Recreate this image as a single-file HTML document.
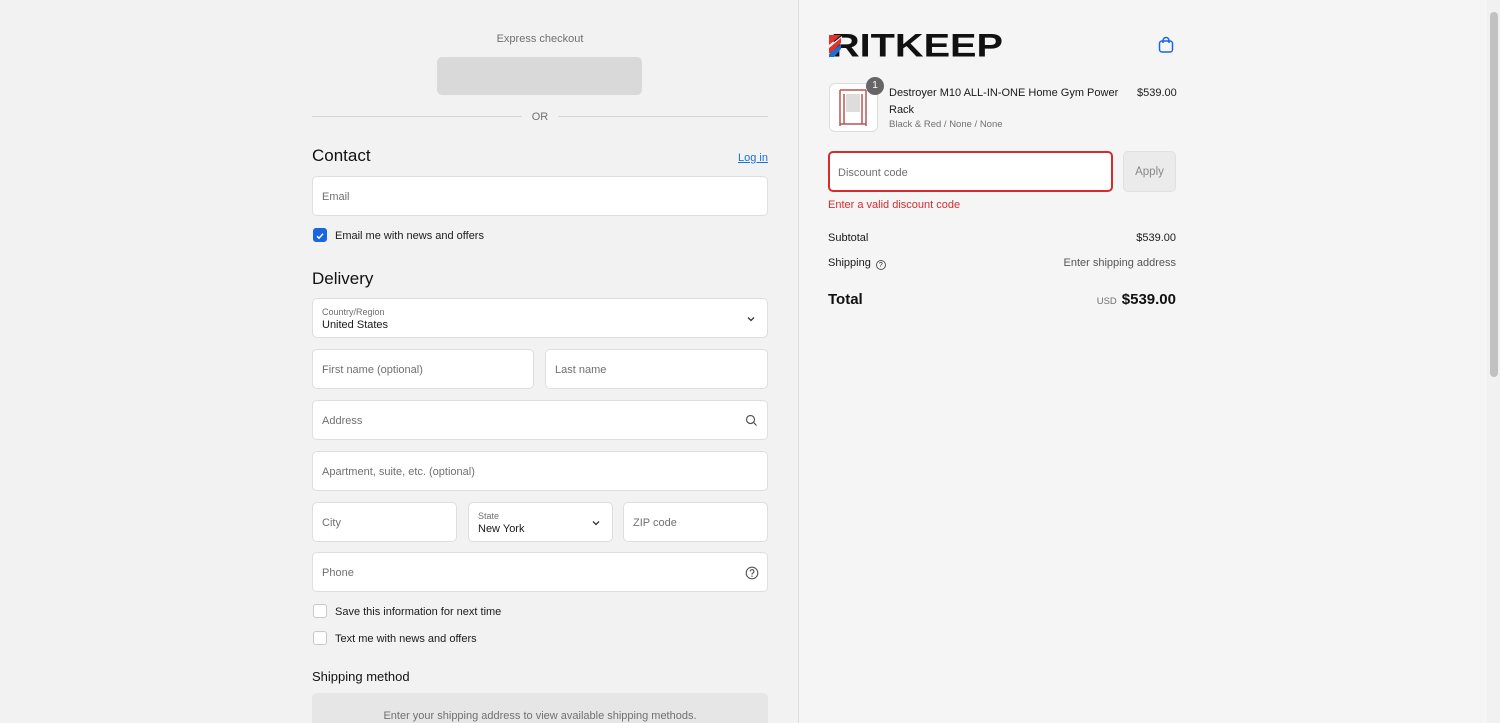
<!DOCTYPE html>
<html><head><meta charset="utf-8"><style>
*{box-sizing:border-box;margin:0;padding:0}
body{width:1500px;height:723px;overflow:hidden;font-family:"Liberation Sans",sans-serif;background:#f2f2f2;position:relative;color:#1a1a1a}
.left{position:absolute;left:0;top:0;width:798px;height:723px;background:#f2f2f2;overflow:hidden}
.right{position:absolute;left:798px;top:0;width:689px;height:723px;background:#f5f5f5;border-left:1px solid #dedede}
.sb{position:absolute;left:1487px;top:0;width:13px;height:723px;background:#f1f1f1}
.sb div{position:absolute;left:3px;top:12px;width:8px;height:365px;background:#c1c1c1;border-radius:4px}
.abs{position:absolute}
.inp{position:absolute;background:#fff;border:1px solid #dedede;border-radius:5px;font-size:11px;color:#707070;padding-left:9px;padding-top:2px;display:flex;align-items:center}
.lbl{font-size:11px;color:#1a1a1a}
.cb{position:absolute;width:14px;height:14px;border:1px solid #c8c8c8;border-radius:3px;background:#fff}
h2{position:absolute;font-size:17px;font-weight:normal;color:#111}
</style></head><body>
<div class="left">
<div class="abs" style="left:312px;top:33px;width:456px;text-align:center;font-size:11px;color:#707070">Express checkout</div>
<div class="abs" style="left:437px;top:57px;width:205px;height:38px;background:#d9d9d9;border-radius:5px"></div>
<div class="abs" style="left:312px;top:116px;width:210px;height:1px;background:#d6d6d6"></div>
<div class="abs" style="left:558px;top:116px;width:210px;height:1px;background:#d6d6d6"></div>
<div class="abs" style="left:522px;top:111px;width:36px;text-align:center;font-size:11px;color:#707070">OR</div>
<h2 style="left:312px;top:146px">Contact</h2>
<div class="abs" style="left:738px;top:152px;font-size:11px;color:#1773d8;text-decoration:underline">Log in</div>
<div class="inp" style="left:312px;top:176px;width:456px;height:40px">Email</div>
<div class="cb" style="left:313px;top:228px;background:#1a66e0;border-color:#1a66e0"><svg width="12" height="12" viewBox="0 0 12 12"><path d="M3 6.2l2 2 4-4.4" stroke="#fff" stroke-width="1.5" fill="none"/></svg></div>
<div class="abs lbl" style="left:335px;top:230px">Email me with news and offers</div>
<h2 style="left:312px;top:269px">Delivery</h2>
<div class="inp" style="left:312px;top:298px;width:456px;height:40px;display:block;padding-top:8px"><div style="font-size:9px;color:#707070">Country/Region</div><div style="font-size:11px;color:#1a1a1a;margin-top:2px">United States</div>
<svg class="abs" style="left:433px;top:15px" width="10" height="10" viewBox="0 0 10 10"><path d="M2 3.5l3 3 3-3" stroke="#333" stroke-width="1.3" fill="none"/></svg></div>
<div class="inp" style="left:312px;top:349px;width:222px;height:40px">First name (optional)</div>
<div class="inp" style="left:545px;top:349px;width:223px;height:40px">Last name</div>
<div class="inp" style="left:312px;top:400px;width:456px;height:40px">Address
<svg class="abs" style="left:432px;top:13px" width="13" height="13" viewBox="0 0 13 13"><circle cx="5.5" cy="5.5" r="4" stroke="#555" stroke-width="1.2" fill="none"/><path d="M8.5 8.5l3 3" stroke="#555" stroke-width="1.2"/></svg></div>
<div class="inp" style="left:312px;top:451px;width:456px;height:40px">Apartment, suite, etc. (optional)</div>
<div class="inp" style="left:312px;top:502px;width:145px;height:40px">City</div>
<div class="inp" style="left:468px;top:502px;width:145px;height:40px;display:block;padding-top:8px"><div style="font-size:9px;color:#707070">State</div><div style="font-size:11px;color:#1a1a1a;margin-top:2px">New York</div>
<svg class="abs" style="left:122px;top:15px" width="10" height="10" viewBox="0 0 10 10"><path d="M2 3.5l3 3 3-3" stroke="#333" stroke-width="1.3" fill="none"/></svg></div>
<div class="inp" style="left:623px;top:502px;width:145px;height:40px">ZIP code</div>
<div class="inp" style="left:312px;top:552px;width:456px;height:40px">Phone
<svg class="abs" style="left:432px;top:13px" width="14" height="14" viewBox="0 0 14 14"><circle cx="7" cy="7" r="5.8" stroke="#555" stroke-width="1.1" fill="none"/><path d="M5.3 5.5a1.8 1.8 0 1 1 2.4 1.6c-.5.2-.7.5-.7 1v.5" stroke="#555" stroke-width="1.1" fill="none"/><circle cx="7" cy="10.2" r=".7" fill="#555"/></svg></div>
<div class="cb" style="left:313px;top:604px"></div>
<div class="abs lbl" style="left:335px;top:606px">Save this information for next time</div>
<div class="cb" style="left:313px;top:631px"></div>
<div class="abs lbl" style="left:335px;top:633px">Text me with news and offers</div>
<div class="abs" style="left:312px;top:669px;font-size:13px;color:#111">Shipping method</div>
<div class="abs" style="left:312px;top:693px;width:456px;height:40px;background:#e6e6e6;border-radius:5px;text-align:center;padding-top:17px;font-size:11px;color:#707070">Enter your shipping address to view available shipping methods.</div>
</div>
<div class="right">
<svg class="abs" style="left:30px;top:32px" width="176" height="26" viewBox="0 0 176 26">
<text x="2" y="24.5" font-family="Liberation Sans" font-weight="bold" font-size="32" fill="#111" textLength="172" lengthAdjust="spacingAndGlyphs">RITKEEP</text>
<path d="M0 3h12l-12 10z" fill="#e0322b"/><path d="M0 14l13-10v5l-10 10H0z" fill="#f5f5f5"/><path d="M0 16l12-10v5L2 21H0z" fill="#e0322b"/><path d="M0 22l12-10v5L5 25H0z" fill="#1e6fd0"/>
</svg>
<svg class="abs" style="left:358px;top:36px" width="18" height="18" viewBox="0 0 18 18"><rect x="2.5" y="5" width="13" height="11" rx="2.5" stroke="#1a66e0" stroke-width="1.5" fill="none"/><path d="M6 7V4.5a3 3 0 0 1 6 0V7" stroke="#1a66e0" stroke-width="1.5" fill="none"/></svg>
<div class="abs" style="left:30px;top:83px;width:49px;height:49px;background:#fff;border:1px solid #ddd;border-radius:6px">
<svg width="47" height="47" viewBox="0 0 47 47"><path d="M10 6v36M36 6v36M10 6h26M10 40h26M14 10v30M32 10v30" stroke="#b55" stroke-width="1.5" fill="none"/><rect x="16" y="10" width="14" height="18" fill="#ddd"/></svg></div>
<div class="abs" style="left:67px;top:77px;width:18px;height:18px;border-radius:9px;background:#666;color:#fff;font-size:10px;text-align:center;line-height:18px">1</div>
<div class="abs" style="left:90px;top:85px;width:235px;font-size:11px;line-height:17px;color:#1a1a1a">Destroyer M10 ALL-IN-ONE Home Gym Power Rack</div>
<div class="abs" style="left:90px;top:119px;font-size:9.5px;color:#707070">Black &amp; Red / None / None</div>
<div class="abs" style="left:338px;top:87px;font-size:11px">$539.00</div>
<div class="abs" style="left:29px;top:151px;width:285px;height:41px;background:#fff;border:2px solid #d72c2c;border-radius:5px;font-size:11px;color:#707070;padding:14px 0 0 8px">Discount code</div>
<div class="abs" style="left:324px;top:151px;width:53px;height:41px;background:#ebebeb;border:1px solid #e0e0e0;border-radius:5px;font-size:11.5px;color:#888;text-align:center;line-height:41px">Apply</div>
<div class="abs" style="left:29px;top:199px;font-size:11px;color:#d72c2c">Enter a valid discount code</div>
<div class="abs" style="left:29px;top:232px;font-size:11px">Subtotal</div>
<div class="abs" style="left:300px;top:232px;width:77px;text-align:right;font-size:11px">$539.00</div>
<div class="abs" style="left:29px;top:257px;font-size:11px">Shipping <span style="display:inline-block;width:10px;height:10px;border:1px solid #555;border-radius:50%;font-size:7px;text-align:center;line-height:9px;vertical-align:-1px;margin-left:2px">?</span></div>
<div class="abs" style="left:220px;top:257px;width:157px;text-align:right;font-size:11px;color:#555;white-space:nowrap">Enter shipping address</div>
<div class="abs" style="left:29px;top:291px;font-size:15px;font-weight:bold;color:#111">Total</div>
<div class="abs" style="left:230px;top:291px;width:147px;text-align:right;font-size:15px;font-weight:bold;color:#111;white-space:nowrap"><span style="font-size:9.5px;font-weight:normal;color:#707070;margin-right:5px">USD</span>$539.00</div>
</div>
<div class="sb"><div></div></div>
</body></html>
